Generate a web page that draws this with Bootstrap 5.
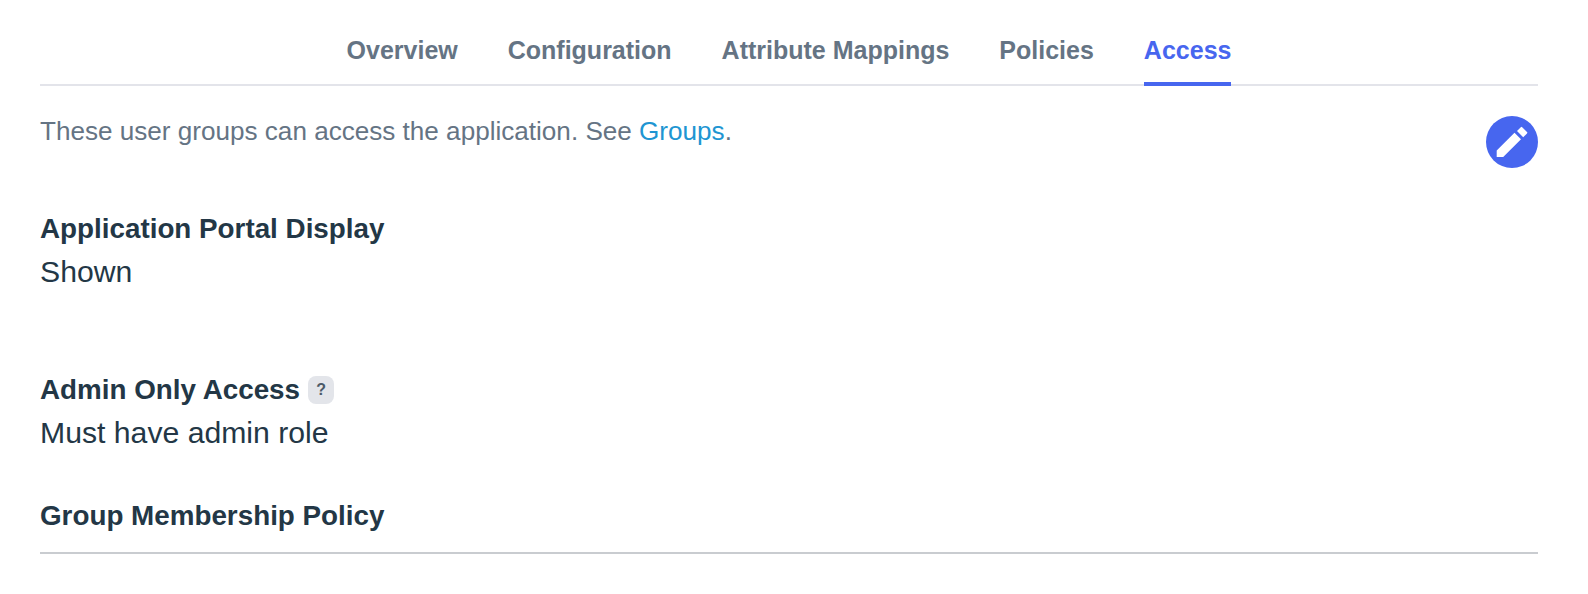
<!DOCTYPE html>
<html lang="en">
<head>
<meta charset="utf-8">
<title>Access</title>
<link href="https://cdn.jsdelivr.net/npm/bootstrap@5.3.0/dist/css/bootstrap.min.css" rel="stylesheet">
<style>
body { font-family: "Liberation Sans", Arial, sans-serif; background: #fff; color: #233746; height: 594px; overflow: hidden; }
.page-wrap { padding: 0 50px 0 40px; }
.tab-bar { height: 86px; border-bottom: 2px solid #e3e4ea; gap: 50px; }
.tab-item { font-size: 25px; font-weight: 700; line-height: 28px; color: #657484; text-decoration: none; padding: 36px 0 20px; height: 86px; margin-bottom: -2px; }
.tab-item.on { color: #4766ef; border-bottom: 4px solid #4766ef; }
.intro-row { padding-top: 30px; height: 126px; }
.intro-text { font-size: 26.1px; line-height: 30px; color: #657484; }
.intro-text a { color: #2095d2; text-decoration: none; }
.edit-round { width: 52px; height: 52px; border-radius: 50%; background: #4766ef; border: 0; padding: 0; }
.field-label { font-size: 27.8px; font-weight: 700; line-height: 34px; color: #233746; margin: 0 0 7px; }
.field-value { font-size: 30.2px; line-height: 38px; color: #233746; margin: 0; }
.help-chip { width: 26px; height: 28px; border-radius: 8px; background: #e3e5ea; color: #4c5a68; font-size: 16px; font-weight: 700; line-height: 28px; text-align: center; margin: 0 0 7px 8px; }
.sec-a { height: 161px; }
.sec-b { height: 126px; }
.end-rule { height: 2px; background: #c9ccd0; margin-top: 19px; }
.last-label { margin-bottom: 0; }
</style>
</head>
<body>
<div class="page-wrap">
  <nav class="tab-bar d-flex justify-content-center">
    <a class="tab-item" href="#">Overview</a>
    <a class="tab-item" href="#">Configuration</a>
    <a class="tab-item" href="#">Attribute Mappings</a>
    <a class="tab-item" href="#">Policies</a>
    <a class="tab-item on" href="#">Access</a>
  </nav>
  <div class="intro-row d-flex justify-content-between align-items-start">
    <div class="intro-text">These user groups can access the application. See <a href="#">Groups</a>.</div>
    <button class="edit-round d-flex align-items-center justify-content-center" type="button" aria-label="Edit">
      <svg width="52" height="52" viewBox="0 0 52 52" aria-hidden="true"><path fill="#fff" d="M10.700 34.500 28.500 16.700 35 23.200 17.200 41H10.700zM31 15 34.800 11.200a1 1 0 0 1 1.400 0L41 16a1 1 0 0 1 0 1.400L37.200 21.200z"/></svg>
    </button>
  </div>
  <section class="sec-a">
    <p class="field-label">Application Portal Display</p>
    <p class="field-value">Shown</p>
  </section>
  <section class="sec-b">
    <div class="d-flex align-items-center"><p class="field-label">Admin Only Access</p><span class="help-chip">?</span></div>
    <p class="field-value">Must have admin role</p>
  </section>
  <p class="field-label last-label">Group Membership Policy</p>
  <div class="end-rule"></div>
</div>
</body>
</html>
